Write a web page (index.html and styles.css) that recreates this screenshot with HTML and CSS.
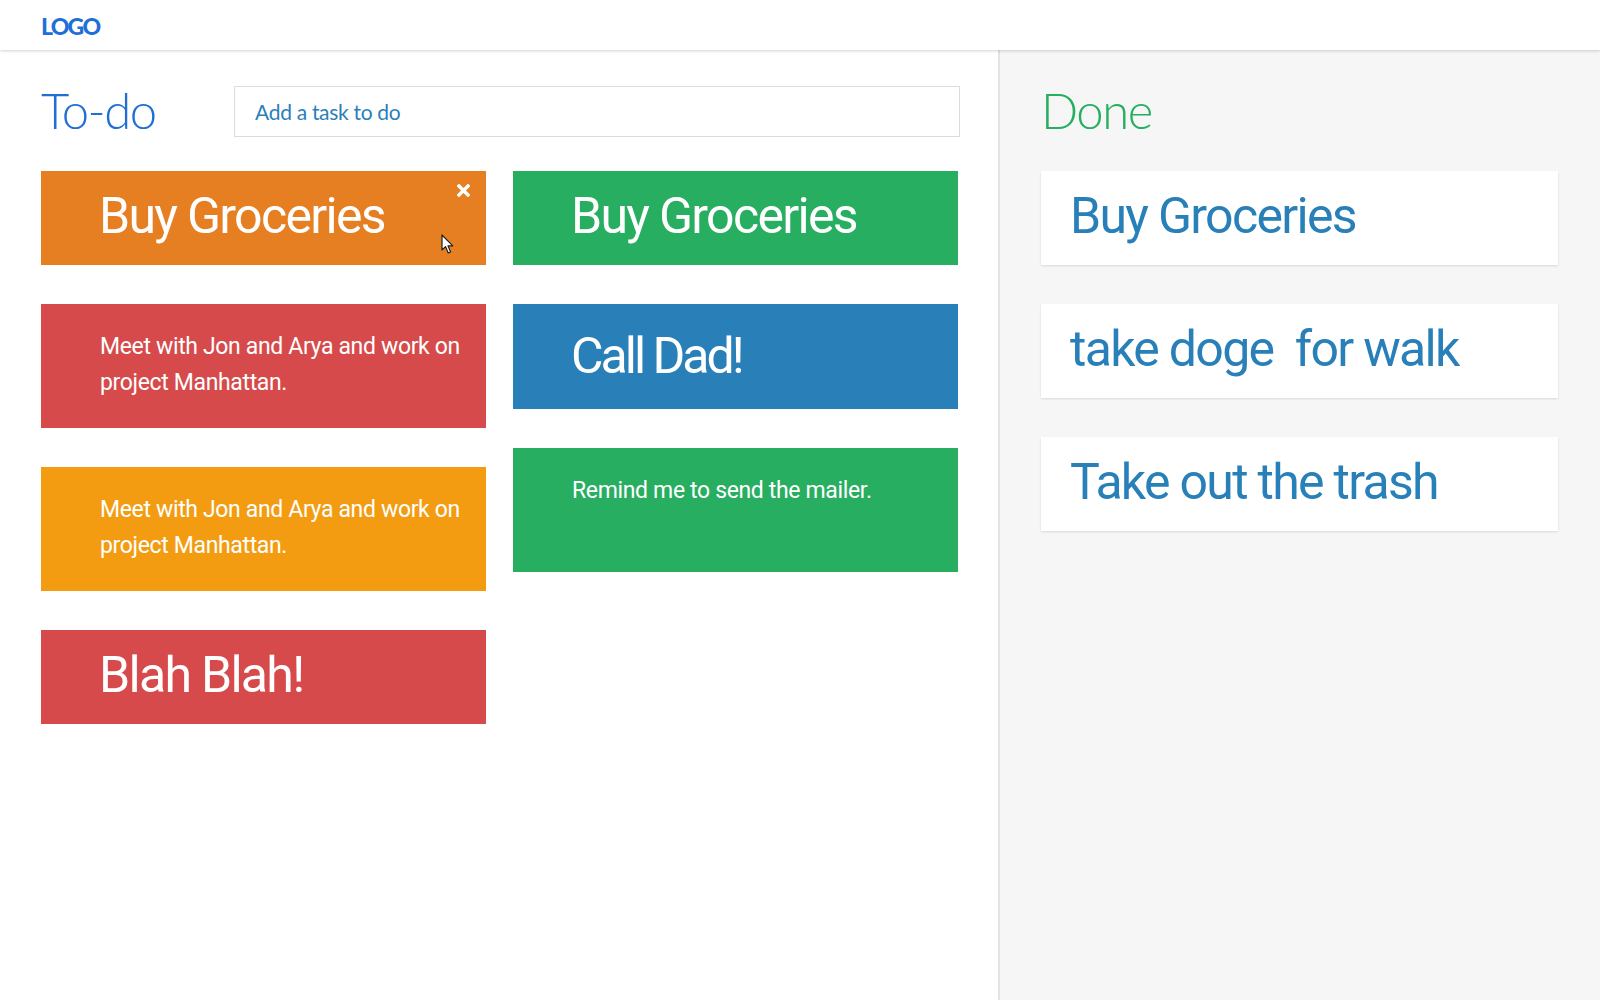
FILE: index.html
```html
<!DOCTYPE html>
<html lang="en">
<head>
<meta charset="utf-8">
<title>To-do</title>
<link rel="stylesheet" href="styles.css">
</head>
<body>
<header class="topbar">
  <div class="logo">LOGO</div>
</header>
<main class="board">
  <section class="todo-pane">
    <div class="pane-head">
      <h1 class="title title--todo">To-do</h1>
      <input class="task-input" type="text" placeholder="Add a task to do">
    </div>
    <div class="todo-grid">
      <div class="todo-col">
        <div class="card card--lg card--carrot">
          Buy Groceries
          <button class="card-close" aria-label="Remove">
            <svg viewBox="0 0 13 13" width="13" height="13"><path d="M2 2 L11 11 M11 2 L2 11" stroke="#fff" stroke-width="3.4" stroke-linecap="square"/></svg>
          </button>
          <svg class="cursor" viewBox="0 0 13 21" width="13" height="21"><path d="M1 1 L1 16 L4.5 12.6 L7.2 19 L9.6 18 L7 11.8 L11.8 11.8 Z" fill="#fff" stroke="#222" stroke-width="1.2" stroke-linejoin="round"/></svg>
        </div>
        <div class="card card--sm card--red">Meet with Jon and Arya and work on project Manhattan.</div>
        <div class="card card--sm card--orange">Meet with Jon and Arya and work on project Manhattan.</div>
        <div class="card card--lg card--red">Blah Blah!</div>
      </div>
      <div class="todo-col">
        <div class="card card--lg card--green">Buy Groceries</div>
        <div class="card card--lg card--tall card--tight card--blue">Call Dad!</div>
        <div class="card card--sm card--green">Remind me to send the mailer.</div>
      </div>
    </div>
  </section>
  <section class="done-pane">
    <div class="pane-head">
      <h1 class="title title--done">Done</h1>
    </div>
    <div class="done-list">
      <div class="done-card">Buy Groceries</div>
      <div class="done-card">take doge&nbsp; for walk</div>
      <div class="done-card">Take out the trash</div>
    </div>
  </section>
</main>
</body>
</html>
```
FILE: styles.css
```css
* { box-sizing: border-box; }

html, body {
  margin: 0;
  padding: 0;
  height: 100%;
}

body {
  font-family: Roboto, "Liberation Sans", sans-serif;
  background: #ffffff;
  display: flex;
  flex-direction: column;
  overflow: hidden;
}

.topbar {
  height: 50px;
  flex: 0 0 50px;
  background: #ffffff;
  box-shadow: 0 1px 3px rgba(0, 0, 0, 0.18);
  padding-left: 41px;
  padding-top: 3px;
  display: flex;
  align-items: center;
  position: relative;
  z-index: 2;
}

.logo {
  font-family: Lato, "Open Sans", sans-serif;
  font-weight: 900;
  font-size: 23px;
  letter-spacing: -1.8px;
  color: #1f6fd6;
  line-height: 1;
}

.board {
  flex: 1;
  display: flex;
}

.todo-pane {
  width: 1000px;
  border-right: 2px solid #e3e3e3;
  padding: 36px 40px 0 41px;
  background: #ffffff;
}

.done-pane {
  flex: 1;
  background: #f6f6f6;
  padding: 36px 42px 0 41px;
}

.pane-head {
  height: 51px;
  display: flex;
  align-items: center;
  margin-bottom: 34px;
}

.title {
  margin: 0;
  font-family: Lato, "Open Sans", sans-serif;
  font-weight: 300;
  font-size: 49px;
  letter-spacing: -1.5px;
  line-height: 51px;
  position: relative;
  top: -1px;
}

.title--todo {
  color: #1f6fd6;
  width: 193px;
  flex: 0 0 193px;
}

.title--done {
  color: #27ae60;
}

.task-input {
  flex: 1;
  height: 51px;
  margin-right: -2px;
  border: 1px solid #dcdcdc;
  padding: 0 20px;
  font-family: Lato, "Open Sans", sans-serif;
  font-size: 21px;
  letter-spacing: -0.3px;
  color: #2980b9;
  outline: none;
  background: #fff;
}

.task-input::placeholder {
  color: #2a7fba;
  opacity: 1;
}

.todo-grid {
  display: grid;
  grid-template-columns: 1fr 1fr;
  column-gap: 27px;
}

.todo-col {
  display: flex;
  flex-direction: column;
  gap: 39px;
}

.card {
  position: relative;
  color: #ffffff;
  padding-left: 58px;
  padding-right: 30px;
}

.card--lg {
  height: 94px;
  font-size: 50px;
  line-height: 60px;
  letter-spacing: -1.7px;
  padding-top: 15px;
  padding-bottom: 19px;
  white-space: nowrap;
}

.card--tall {
  height: 105px;
  padding-top: 22px;
  padding-bottom: 23px;
}

.card--tight {
  letter-spacing: -3px;
}

.card--sm {
  min-height: 124px;
  font-size: 23px;
  line-height: 36px;
  letter-spacing: -0.35px;
  padding-top: 25px;
  padding-bottom: 25px;
  padding-left: 59px;
  padding-right: 16px;
}

.card--carrot { background: #e67e22; }
.card--red { background: #d64a4b; }
.card--orange { background: #f39c12; }
.card--green { background: #27ae60; }
.card--blue { background: #2980b9; }

.card-close {
  position: absolute;
  top: 13px;
  right: 16px;
  width: 13px;
  height: 13px;
  padding: 0;
  border: 0;
  background: transparent;
  display: block;
}

.card-close svg { display: block; }

.cursor {
  position: absolute;
  left: 400px;
  top: 63px;
}

.done-list {
  display: flex;
  flex-direction: column;
  gap: 39px;
}

.done-card {
  height: 94px;
  background: #ffffff;
  box-shadow: 0 1px 2px rgba(0, 0, 0, 0.12);
  color: #2980b9;
  font-size: 50px;
  line-height: 60px;
  letter-spacing: -1.7px;
  padding: 15px 20px 19px 29px;
  white-space: nowrap;
}
```
